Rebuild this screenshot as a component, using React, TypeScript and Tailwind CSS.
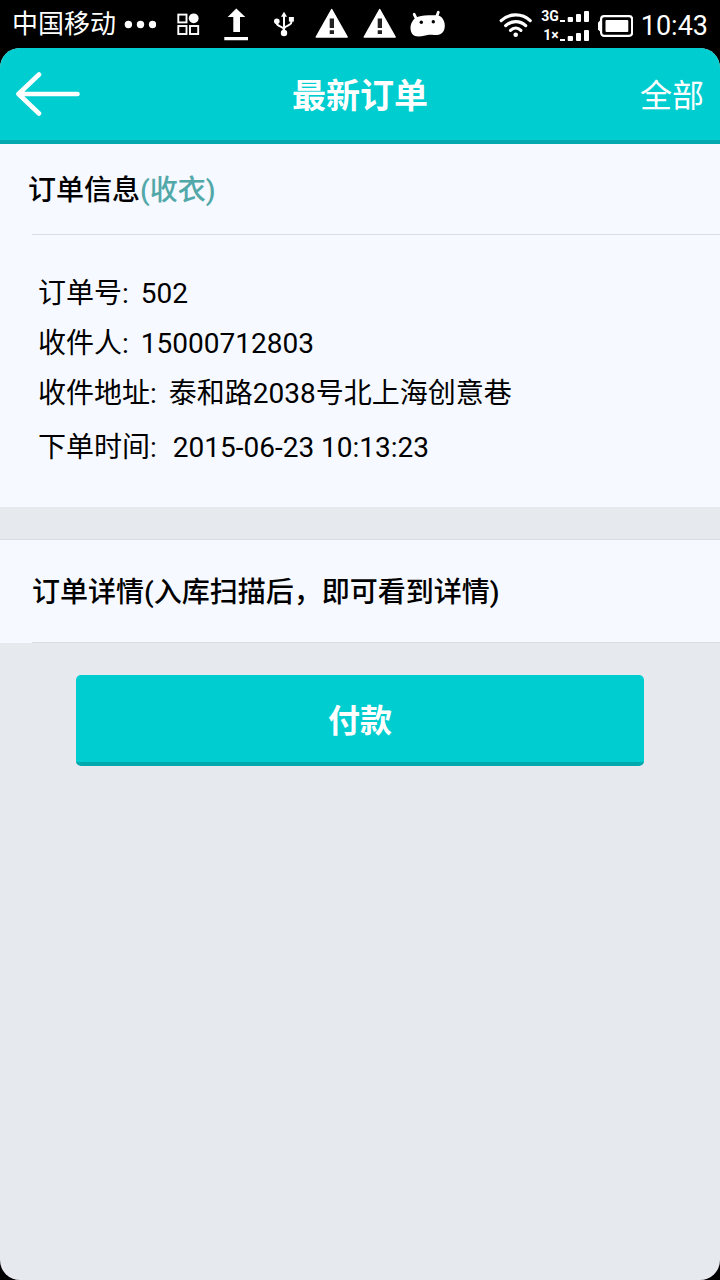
import type { ReactNode } from "react";

const ORDER_ROWS = [
  { label: "订单号", value: "502", className: "gap-3" },
  { label: "收件人", value: "15000712803", className: "gap-3" },
  { label: "收件地址", value: "泰和路2038号北上海创意巷", className: "gap-3" },
  { label: "下单时间", value: "2015-06-23 10:13:23", className: "gap-4 mt-1" },
];

function StatusIcon({ children }: { children: ReactNode }) {
  return (
    <svg width="48" height="48" viewBox="0 0 48 48" fill="#fff" aria-hidden="true" className="shrink-0">
      {children}
    </svg>
  );
}

function WarningIcon() {
  return (
    <StatusIcon>
      <path d="M23.7 9.500 39.200 37H8.200Z" stroke="#fff" strokeWidth="1.400" strokeLinejoin="round" />
      <path d="M21.700 18.500H26V28h-4.300zM21.700 30.200H26V34h-4.300z" fill="#222" />
    </StatusIcon>
  );
}

function SignalRow({ label }: { label: string }) {
  return (
    <div className="flex h-[19px] items-end justify-end gap-px">
      <span className="text-[14px] leading-[11px] font-bold">{label}</span>
      <svg width="29" height="11" viewBox="0 0 29 11" fill="#fff" aria-hidden="true">
        <rect x="0" y="9" width="5" height="2" />
        <rect x="7.7" y="6" width="5.3" height="5" rx="1" />
        <rect x="16" y="3" width="5" height="8" rx="1" />
        <rect x="24" y="0" width="5" height="11" rx="1" />
      </svg>
    </div>
  );
}

function StatusBar() {
  return (
    <div className="flex h-12 items-center justify-between px-3 text-white">
      <div className="flex items-center">
        <span className="text-[26px] leading-12">中国移动</span>
        <svg width="32" height="48" viewBox="0 0 32 48" fill="#fff" aria-hidden="true" className="mx-2">
          <circle cx="4.4" cy="24.5" r="3.7" />
          <circle cx="16.5" cy="24.5" r="3.7" />
          <circle cx="28.6" cy="24.5" r="3.7" />
        </svg>
        <StatusIcon>
          <g fill="none" stroke="#fff" strokeWidth="1.9">
            <rect x="14.3" y="14.6" width="8.2" height="7.8" />
            <rect x="14.3" y="26" width="8.2" height="8" />
            <rect x="26" y="26" width="8.2" height="8" />
          </g>
          <circle cx="29.7" cy="18.3" r="4.9" />
        </StatusIcon>
        <StatusIcon>
          <path d="M24.3 8.500 33.300 17H28v15h-6.700V17h-5.600zM12.300 37H36v3.200H12.300z" />
        </StatusIcon>
        <StatusIcon>
          <g fill="none" stroke="#fff" strokeWidth="2">
            <path d="M24 15v18" />
            <path d="M16.800 21.500v1.800c0 3.500 6.800 2.700 7.200 6.700" />
            <path d="M31.300 19v3.500c0 3.200-7 3-7.300 6.500" />
          </g>
          <path d="m24 11.800 3 5h-6z" />
          <circle cx="24" cy="33" r="3.200" />
          <circle cx="16.800" cy="21.300" r="2.800" />
          <rect x="28.900" y="17" width="5" height="4.600" />
        </StatusIcon>
        <WarningIcon />
        <WarningIcon />
        <StatusIcon>
          <path d="M11.500 18c3-1.800 7.500-2.700 13-2.700 3.500 0 6-.3 9 0 4.500.7 7.400 5.400 7.300 10.700-.1 5.500-3.300 9-7.800 9-3.500 0-5-.6-8-.2-3.500.5-6 1.700-10.500 1.700-5.200 0-8-3.500-8-8.500 0-4 2.200-8 5-10Z" />
          <path d="m10.200 14.300 2.300 4.700M34.300 12.200 32.500 17" stroke="#fff" strokeWidth="2.800" strokeLinecap="round" />
          <circle cx="17.300" cy="22.300" r="1.700" fill="#000" />
          <circle cx="29.300" cy="21.700" r="1.700" fill="#000" />
        </StatusIcon>
      </div>
      <div className="flex items-center gap-2">
        <svg width="36" height="48" viewBox="0 0 36 48" fill="none" stroke="#fff" strokeWidth="3.2" strokeLinecap="round" aria-hidden="true">
          <path d="M4.200 20.600c8-7.700 21-7.700 29 0" />
          <path d="M8.700 25.600c5.700-5.400 14.300-5.400 20 0" />
          <path d="M13.500 30.300c3-2.800 7.400-2.800 10.400 0" />
          <circle cx="18.700" cy="34.700" r="2.300" fill="#fff" stroke="none" />
        </svg>
        <div className="flex h-12 w-12 flex-col pt-[3px]">
          <SignalRow label="3G" />
          <SignalRow label="1×" />
        </div>
        <svg width="36" height="48" viewBox="0 0 36 48" fill="#fff" aria-hidden="true">
          <path d="M1 22.500 4 19.500v13L1 29.500z" />
          <rect x="4.500" y="16.200" width="31" height="19.600" rx="3" transform="translate(-.4 0)" fill="none" stroke="#fff" strokeWidth="2.200" />
          <rect x="8.500" y="20" width="22.800" height="12" rx="1" />
        </svg>
        <span className="pt-1 text-[27px] leading-11">10:43</span>
      </div>
    </div>
  );
}

function Header() {
  return (
    <header className="grid h-24 grid-cols-[1fr_auto_1fr] items-center border-b-4 border-[#00a9ae] bg-[#00cdcf] px-4 text-white">
      <button type="button" aria-label="返回" className="cursor-pointer justify-self-start">
        <svg width="64" height="44" viewBox="0 0 64 44" fill="none" stroke="#fff" strokeWidth="4.6" strokeLinecap="round" strokeLinejoin="round" aria-hidden="true">
          <path d="M23 2.500 2.500 22 23 41.500M2.500 22h59" />
        </svg>
      </button>
      <h1 className="pt-1 text-[34px] font-bold">最新订单</h1>
      <a href="#all" className="justify-self-end pt-1 text-[32px]">全部</a>
    </header>
  );
}

export default function App() {
  return (
    <div className="flex min-h-screen flex-col bg-black font-[Roboto,'Noto_Sans_CJK_SC',sans-serif]">
      <StatusBar />
      <div className="flex-1 overflow-hidden rounded-[20px] bg-[#e6e9ee] text-[28px] text-black">
        <Header />
        <main>
          <section className="bg-[#f6f9ff] pb-[34px]">
            <h2 className="flex h-[90px] items-center pt-1 pl-7 font-medium">
              订单信息<span className="text-[#52a8a9]">(收衣)</span>
            </h2>
            <dl className="ml-8 border-t border-[#d9dce1] pt-[34px] pl-[6px]">
              {ORDER_ROWS.map((row) => (
                <div key={row.label} className={`flex leading-[50px] ${row.className}`}>
                  <dt>{row.label}:</dt>
                  <dd>{row.value}</dd>
                </div>
              ))}
            </dl>
          </section>

          <section className="mt-8 border-t border-[#d9dce1] bg-[#f6f9ff] pl-8">
            <h2 className="flex h-[103px] items-center border-b border-[#d9dce1] pt-1 font-medium">
              订单详情(入库扫描后，即可看到详情)
            </h2>
          </section>

          <div className="px-[76px] pt-8">
            <button
              type="button"
              className="h-[91px] w-full cursor-pointer rounded-[5px] border-b-4 border-[#00a9ae] bg-[#00cdcf] pt-1 text-[32px] font-bold text-white"
            >
              付款
            </button>
          </div>
        </main>
      </div>
    </div>
  );
}
